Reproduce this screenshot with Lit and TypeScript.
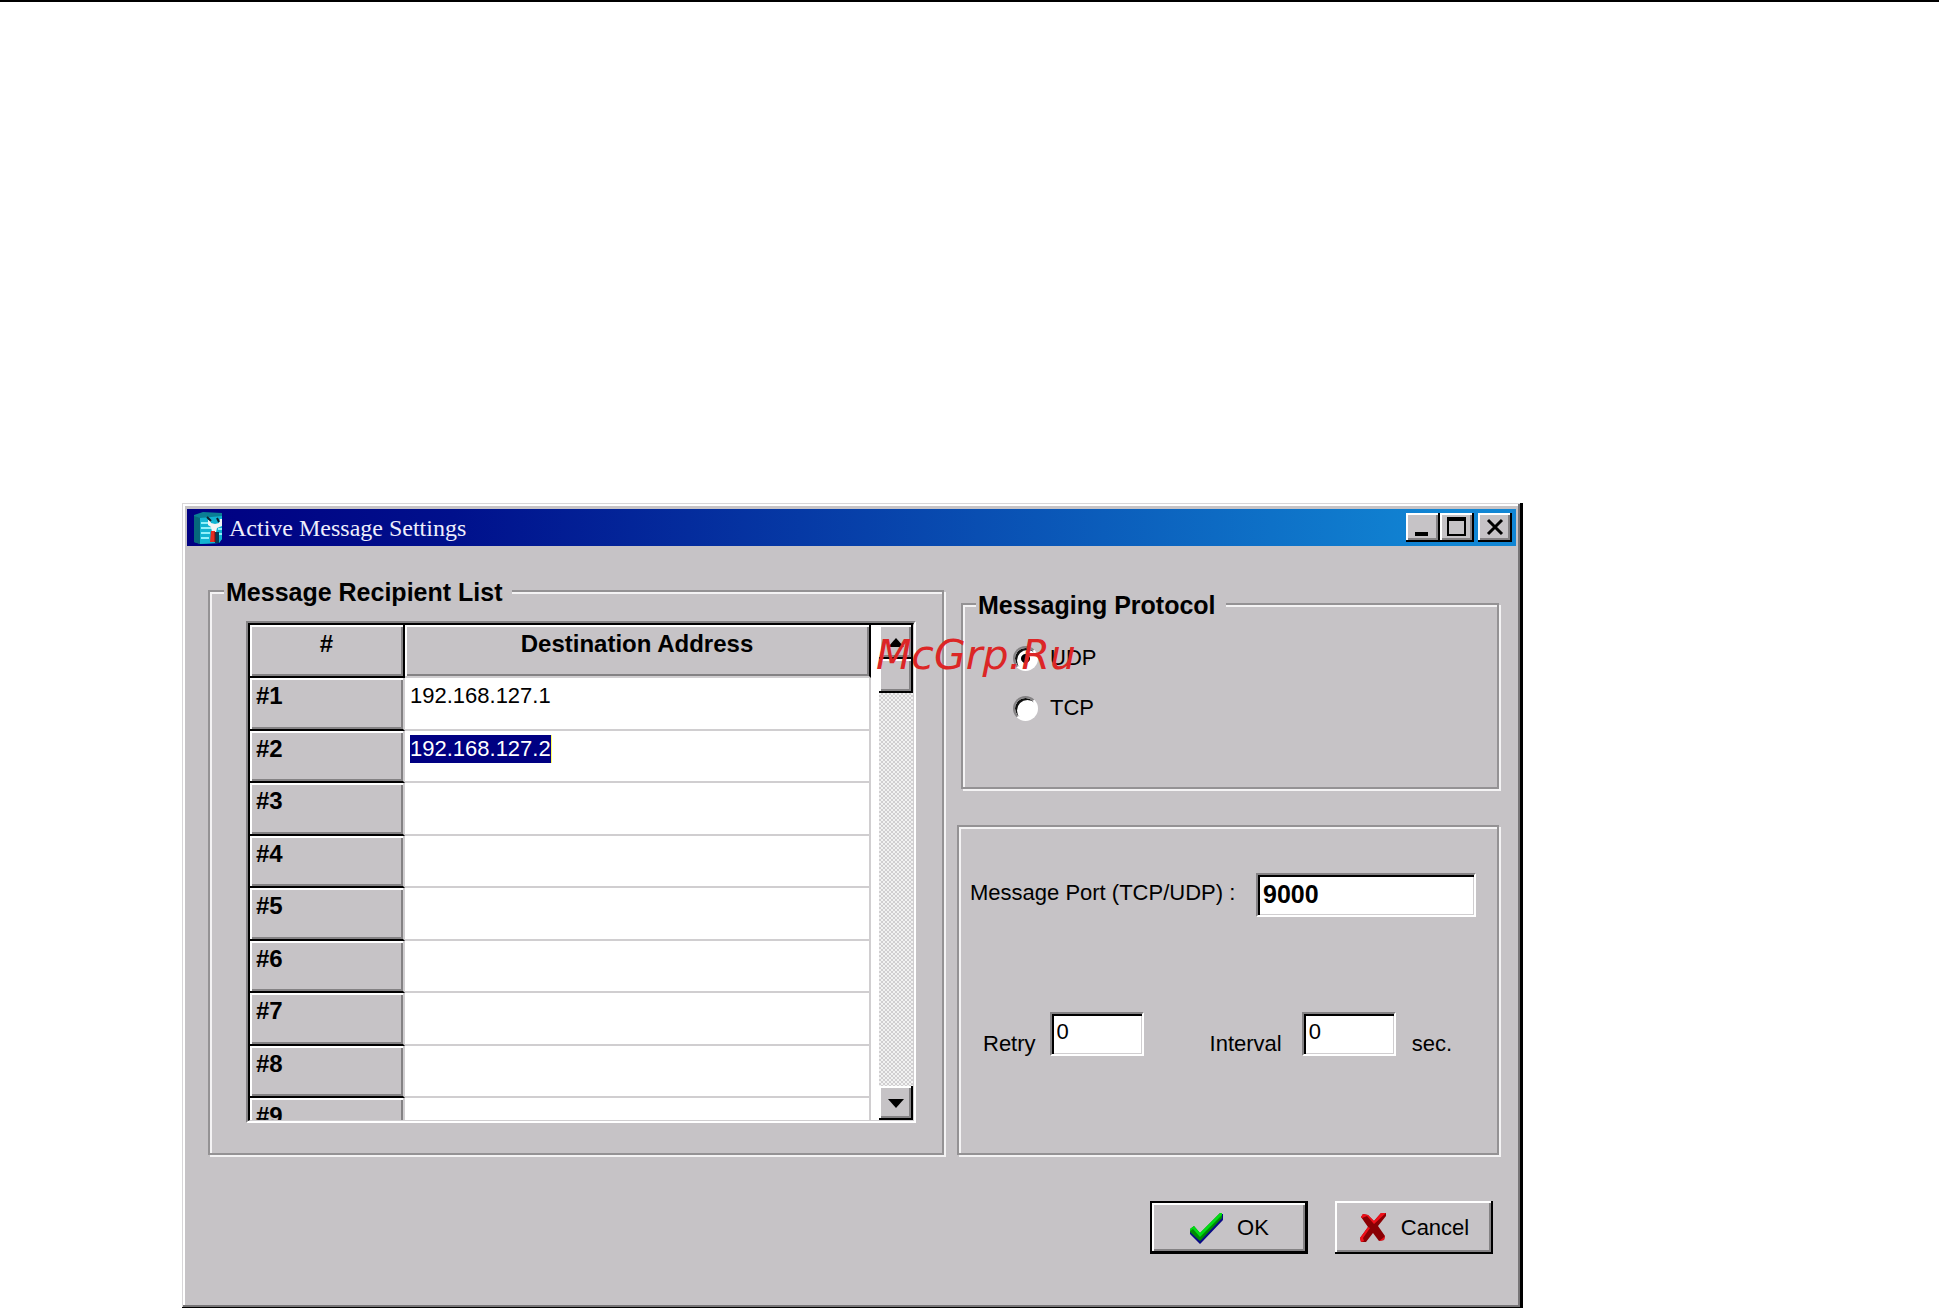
import { LitElement, html, css, svg } from "lit";
import { customElement, state } from "lit/decorators.js";
import { classMap } from "lit/directives/class-map.js";

const serverIcon = svg`
  <path d="M1 3 L10 0 L29 1 V27 L26 31 L7 32 L1 30 Z" fill="#0a7f94"/>
  <path d="M1 4 L7 6 V32 L1 30 Z" fill="#06687c"/>
  <path d="M7 6 L29 4 V27 L26 31 L7 32 Z" fill="#12b4d2"/>
  <path d="M8 11 H15 M8 16 H19 M8 21 H17 M8 26 H16 M25 17 H29 M26 22 H29" stroke="#8ff0fa" stroke-width="2"/>
  <path d="M22 20 H26 V31 H22 Z" fill="#063c58"/>
  <path d="M15 8 V13 L18 15 L19 20 H23 L24 16 L29 14 V7 H27 L26 11 L22 12 L18 11 L17 8 Z" fill="#f4f4f4"/>
  <path d="M24 6 L26 10 M14 5 L18 9" stroke="#10202c" stroke-width="2"/>
  <path d="M18 19 H22 V30 H17 Z" fill="#e62a20"/>
  <path d="M22 20 V30" stroke="#7a0c0c" stroke-width="1"/>`;

const checkIcon = svg`
  <path d="M1 18 L5 15 L11 22 L31 2 L34 2 V8 L14 29 L11 32 L1 22 Z" fill="#0a0a86"/>
  <path d="M1 17 L5 14 L11 21 L31 1 H33 V6 L14 26 L11 29 L1 20 Z" fill="#008a06"/>
  <path d="M1 17 L5 14 L11 21 L31 1 H33 V3 L11 25 L4 17 L1 19 Z" fill="#00dc14"/>`;

const crossIcon = svg`
  <path d="M4 2 L9 3 L15 9 L22 1 L27 1 L27 4 L19 14 L26 24 L25 28 L20 29 L14 21 L7 30 L2 30 L1 26 L9 15 L2 5 Z" fill="#8a0004"/>
  <path d="M2 5 L4 2 L9 3 L15 9 L22 1 L27 1 L15 12 L8 4 L3 6 Z M9 15 L1 26 L2 30 L5 29 L4 26 L11 16 Z M24 26 L26 24 L25 28 L20 29 Z" fill="#f0101a"/>`;

@customElement("app-root")
export class AppRoot extends LitElement {
  static styles = css`
    :host {
      display: block;
      --face: #c6c3c6;
      --shade: #848284;
      --etch: #949294;
      --light: #f4f3f4;
      --line: #d0ced0;
      --navy: #000082;
      font-family: "Liberation Sans", Arial, sans-serif;
      font-size: 22px;
      line-height: 28px;
      color: #000;
    }
    * {
      box-sizing: border-box;
    }
    .page {
      border-top: 2px solid #000;
      padding: 501px 416px 0 182px;
      background: #fff;
    }
    .dialog {
      background: var(--face);
      padding: 6px 7px 5px 5px;
      box-shadow:
        inset -3px -3px #000,
        inset 1px 1px #d8d6d8,
        inset -5px -5px #777577,
        inset 3px 3px #fff;
    }
    .titlebar {
      display: flex;
      align-items: center;
      height: 37px;
      padding: 0 4px 0 6px;
      background: linear-gradient(90deg, #000082 0%, #00108c 20%, #1186d4 95%);
    }
    .app-icon {
      width: 30px;
      height: 32px;
    }
    .title {
      flex: 1;
      margin: 0;
      padding-left: 6px;
      font: 24px/30px "Liberation Serif", "Times New Roman", serif;
      color: #eeeefc;
    }
    button {
      font: inherit;
      color: #000;
      background: var(--face);
      border: 0;
      padding: 0;
      display: flex;
      align-items: center;
      justify-content: center;
    }
    .raised {
      box-shadow:
        inset -2px -2px #000,
        inset 2px 2px #fff,
        inset -4px -4px var(--shade);
    }
    .win-btn {
      width: 34px;
      height: 29px;
    }
    .win-btn svg {
      width: 34px;
      height: 29px;
    }
    .close {
      margin-left: 4px;
    }
    .content {
      display: grid;
      grid-template-columns: 738fr 544fr;
      gap: 11px;
      padding: 30px 15px 0 21px;
    }
    .group {
      margin: 0 2px 2px 0;
      min-width: 0;
      border: 2px solid var(--etch);
      box-shadow:
        2px 2px var(--light),
        inset 2px 2px var(--light);
    }
    legend {
      font-weight: bold;
      font-size: 25px;
      line-height: 28px;
      padding: 2px 10px 0 2px;
      background: var(--face);
    }
    .recipients {
      padding: 15px 26px 30px 14px;
    }
    .grid-frame {
      margin-left: 22px;
      border: 2px solid #fff;
      border-top-color: var(--shade);
      border-left-color: var(--shade);
    }
    .grid-inner {
      display: flex;
      height: 498px;
      background: #fff;
      border: 1px solid var(--line);
      border-top: 2px solid #000;
      border-left: 2px solid #000;
    }
    .viewport {
      flex: 1;
      overflow: hidden;
      margin-right: 8px;
    }
    table {
      width: 100%;
      table-layout: fixed;
      border-collapse: separate;
      border-spacing: 0;
    }
    .col-index {
      width: 155px;
    }
    th,
    td {
      padding: 4px 5px 0;
      height: 53px;
      vertical-align: top;
      text-align: left;
    }
    tr:nth-child(even) > * {
      height: 52px;
    }
    th {
      font-size: 24px;
      background: var(--face);
      border-bottom: 2px solid #000;
      border-right: 2px solid #000;
      padding-left: 6px;
      box-shadow:
        inset 2px 2px #fff,
        inset -2px -2px var(--shade);
    }
    thead th {
      text-align: center;
      padding: 5px 6px 0;
    }
    thead .address {
      border-bottom-color: var(--line);
    }
    tbody th {
      border-right-color: var(--line);
    }
    td {
      border-bottom: 2px solid var(--line);
      border-right: 2px solid var(--line);
    }
    .selected {
      display: inline-block;
      background: var(--navy);
      color: #fff;
      border-right: 1px solid #ffff60;
    }
    .scrollbar {
      display: flex;
      flex-direction: column;
      width: 34px;
      background: repeating-conic-gradient(#d0ced0 0% 25%, #f2f2f2 0% 50%) 0 0 / 4px 4px;
    }
    .scroll-btn {
      height: 34px;
    }
    .scroll-btn svg {
      width: 16px;
      height: 9px;
    }
    .scroll-btn.down {
      margin-top: auto;
    }
    .side {
      display: flex;
      flex-direction: column;
      gap: 34px;
      padding-top: 13px;
    }
    .protocol {
      margin-left: 4px;
      padding: 14px 11px 54px 13px;
    }
    .radio {
      display: flex;
      align-items: center;
      gap: 12px;
      height: 50px;
      padding-left: 37px;
    }
    .radio input {
      appearance: none;
      width: 25px;
      height: 25px;
      margin: 0;
      border-radius: 50%;
      border: 2px solid;
      border-color: #848284 #fff #fff #848284;
      background: #fff;
      box-shadow: inset 2px 2px #101010;
    }
    .radio input:checked {
      background: radial-gradient(circle, #000 0 4px, #fff 5px);
    }
    .port-panel {
      flex: 1;
      padding: 46px 21px 0 11px;
    }
    .port-row {
      display: flex;
      justify-content: space-between;
      align-items: flex-start;
      padding-bottom: 95px;
    }
    .port-row label {
      padding-top: 6px;
      white-space: nowrap;
    }
    .timing-row {
      display: flex;
      align-items: flex-end;
      padding-left: 13px;
      line-height: 24px;
    }
    .text-input {
      font: inherit;
      width: 94px;
      height: 44px;
      padding: 0 5px 2px;
      background: #fff;
      color: #000;
      border: 2px solid #fff;
      border-top-color: var(--shade);
      border-left-color: var(--shade);
      border-radius: 0;
      box-shadow:
        inset 2px 2px #000,
        inset -1px -1px var(--line);
      outline: 0;
    }
    .retry,
    .interval {
      padding-bottom: 4px;
    }
    .port {
      width: 220px;
      font-size: 25px;
      font-weight: bold;
    }
    .retry {
      margin: 0 66px 0 14px;
    }
    .interval {
      margin: 0 16px 0 20px;
    }
    .actions {
      display: flex;
      justify-content: flex-end;
      gap: 27px;
      padding: 44px 23px 51px;
    }
    .action {
      width: 158px;
      height: 53px;
      gap: 14px;
    }
    .action svg {
      width: 34px;
      height: 32px;
    }
    .action .cross {
      width: 28px;
    }
    .default {
      box-shadow:
        inset -3px -3px #000,
        inset 2px 2px #000,
        inset 4px 4px #fff,
        inset -5px -5px var(--shade);
    }
    .stamp {
      position: absolute;
      left: 876px;
      top: 631px;
      font: italic 41px/48px "DejaVu Sans", Verdana, sans-serif;
      color: #dc2626;
      pointer-events: none;
    }
  `;

  @state() private protocol = "UDP";

  private recipients = ["192.168.127.1", "192.168.127.2", "", "", "", "", "", "", ""];
  private selectedRow = 1;

  private renderRow(address: string, index: number) {
    return html`<tr>
      <th scope="row">#${index + 1}</th>
      <td><span class=${classMap({ selected: index === this.selectedRow })}>${address}</span></td>
    </tr>`;
  }

  private renderRadio(name: string) {
    return html`<label class="radio">
      <input
        type="radio"
        name="protocol"
        .checked=${this.protocol === name}
        @change=${() => (this.protocol = name)}
      />${name}
    </label>`;
  }

  render() {
    return html`
      <div class="page">
        <main class="dialog">
          <header class="titlebar">
            <svg class="app-icon" viewBox="0 0 30 32">${serverIcon}</svg>
            <h1 class="title">Active Message Settings</h1>
            <button class="win-btn raised" aria-label="Minimize">
              <svg viewBox="0 0 34 29"><path d="M9 19h13v4H9z" /></svg>
            </button>
            <button class="win-btn raised" aria-label="Maximize">
              <svg viewBox="0 0 34 29">
                <path d="M7 4h19v19H7z M9 8v13h15V8z" fill-rule="evenodd" />
              </svg>
            </button>
            <button class="win-btn raised close" aria-label="Close">
              <svg viewBox="0 0 34 29">
                <path d="M10 7 L24 21 M24 7 L10 21" stroke="#000" stroke-width="3" />
              </svg>
            </button>
          </header>

          <div class="content">
            <fieldset class="group recipients">
              <legend>Message Recipient List</legend>
              <div class="grid-frame">
                <div class="grid-inner">
                  <div class="viewport">
                    <table>
                      <colgroup>
                        <col class="col-index" />
                        <col />
                      </colgroup>
                      <thead>
                        <tr>
                          <th scope="col">#</th>
                          <th scope="col" class="address">Destination Address</th>
                        </tr>
                      </thead>
                      <tbody>
                        ${this.recipients.map((a, i) => this.renderRow(a, i))}
                      </tbody>
                    </table>
                  </div>
                  <div class="scrollbar">
                    <button class="scroll-btn raised" aria-label="Scroll up">
                      <svg viewBox="0 0 16 9"><path d="M8 0l8 9H0z" /></svg>
                    </button>
                    <button class="scroll-btn raised" aria-label="Scroll thumb"></button>
                    <button class="scroll-btn raised down" aria-label="Scroll down">
                      <svg viewBox="0 0 16 9"><path d="M0 0h16l-8 9z" /></svg>
                    </button>
                  </div>
                </div>
              </div>
            </fieldset>

            <div class="side">
              <fieldset class="group protocol">
                <legend>Messaging Protocol</legend>
                ${this.renderRadio("UDP")} ${this.renderRadio("TCP")}
              </fieldset>

              <section class="group port-panel">
                <div class="port-row">
                  <label for="port">Message Port (TCP/UDP) :</label>
                  <input id="port" class="text-input port" type="text" value="9000" />
                </div>
                <div class="timing-row">
                  <label for="retry">Retry</label>
                  <input id="retry" class="text-input retry" type="text" value="0" />
                  <label for="interval">Interval</label>
                  <input id="interval" class="text-input interval" type="text" value="0" />
                  <span>sec.</span>
                </div>
              </section>
            </div>
          </div>

          <footer class="actions">
            <button class="action default">
              <svg viewBox="0 0 34 32">${checkIcon}</svg>OK
            </button>
            <button class="action raised">
              <svg class="cross" viewBox="0 0 28 32">${crossIcon}</svg>Cancel
            </button>
          </footer>
        </main>
        <div class="stamp">McGrp.Ru</div>
      </div>
    `;
  }
}
